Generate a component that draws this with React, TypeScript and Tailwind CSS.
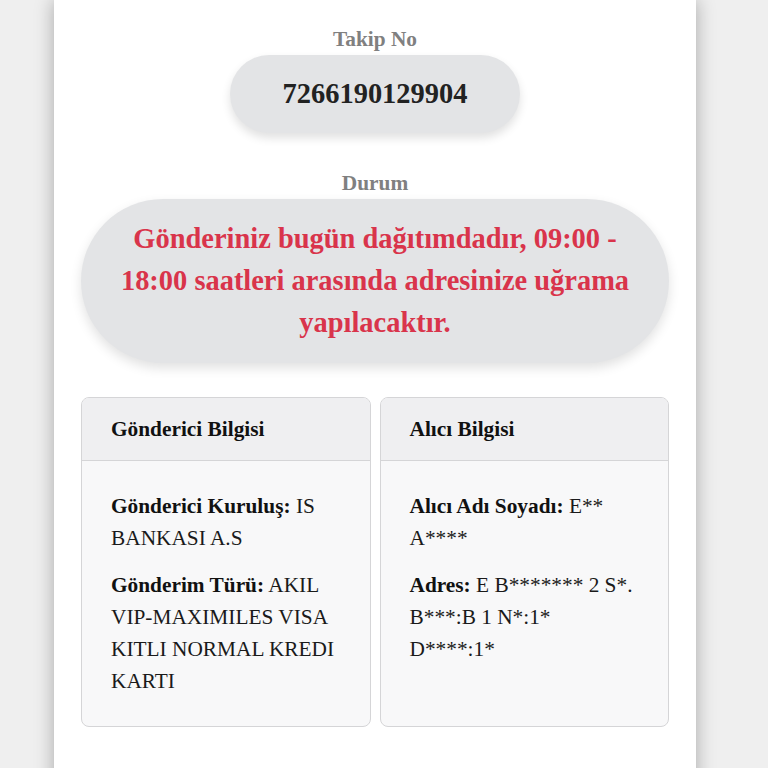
import React from "react";

type Field = { label: string; value: string };

const sender: Field[] = [
  { label: "Gönderici Kuruluş:", value: "IS BANKASI A.S" },
  { label: "Gönderim Türü:", value: "AKIL VIP-MAXIMILES VISA KITLI NORMAL KREDI KARTI" },
];

const receiver: Field[] = [
  { label: "Alıcı Adı Soyadı:", value: "E** A****" },
  { label: "Adres:", value: "E B******* 2 S*. B***:B 1 N*:1* D****:1*" },
];

function InfoCard({ title, fields }: { title: string; fields: Field[] }) {
  return (
    <div className="flex flex-col overflow-hidden rounded-[8px] border border-[#d5d5d7] bg-[#f8f8f9]">
      <div className="border-b border-[#d5d5d7] bg-[#efeff1] px-[29px] py-[15px] text-[21.33px] font-bold leading-[32px] text-[#111]">
        {title}
      </div>
      <div className="flex flex-col gap-[15px] px-[29px] pb-[29px] pt-[29px] text-[21.33px] leading-[32px] text-[#1a1a1a]">
        {fields.map((f) => (
          <p key={f.label}>
            <span className="font-bold text-[#111]">{f.label}</span> {f.value}
          </p>
        ))}
      </div>
    </div>
  );
}

export default function App() {
  return (
    <div
      className="min-h-screen bg-[#efefef] pl-[54px]"
      style={{ fontFamily: '"Liberation Serif", "Times New Roman", serif' }}
    >
      <div className="w-[642px] min-h-[820px] bg-white px-[27px] pt-[23px] pb-[40px] shadow-[0_0_18px_rgba(0,0,0,0.3)]">
        <div className="flex flex-col items-center">
          <div className="text-[21.33px] font-bold leading-[32px] text-[#808080]">Takip No</div>
          <div className="rounded-full bg-[#e3e4e6] px-[53px] py-[18px] text-[28.44px] font-bold leading-[42px] text-[#222] shadow-[0_5px_10px_rgba(0,0,0,0.12)]">
            7266190129904
          </div>
        </div>

        <div className="mt-[34px] flex flex-col items-center">
          <div className="text-[21.33px] font-bold leading-[32px] text-[#808080]">Durum</div>
          <div className="w-full rounded-full bg-[#e3e4e6] px-[32px] py-[19px] text-center text-[28.44px] font-bold leading-[42px] text-[#d9344b] shadow-[0_5px_12px_rgba(0,0,0,0.12)]">
            Gönderiniz bugün dağıtımdadır, 09:00 - 18:00 saatleri arasında adresinize uğrama yapılacaktır.
          </div>
        </div>

        <div className="mt-[34px] grid grid-cols-2 gap-[9px]">
          <InfoCard title="Gönderici Bilgisi" fields={sender} />
          <InfoCard title="Alıcı Bilgisi" fields={receiver} />
        </div>
      </div>
    </div>
  );
}
